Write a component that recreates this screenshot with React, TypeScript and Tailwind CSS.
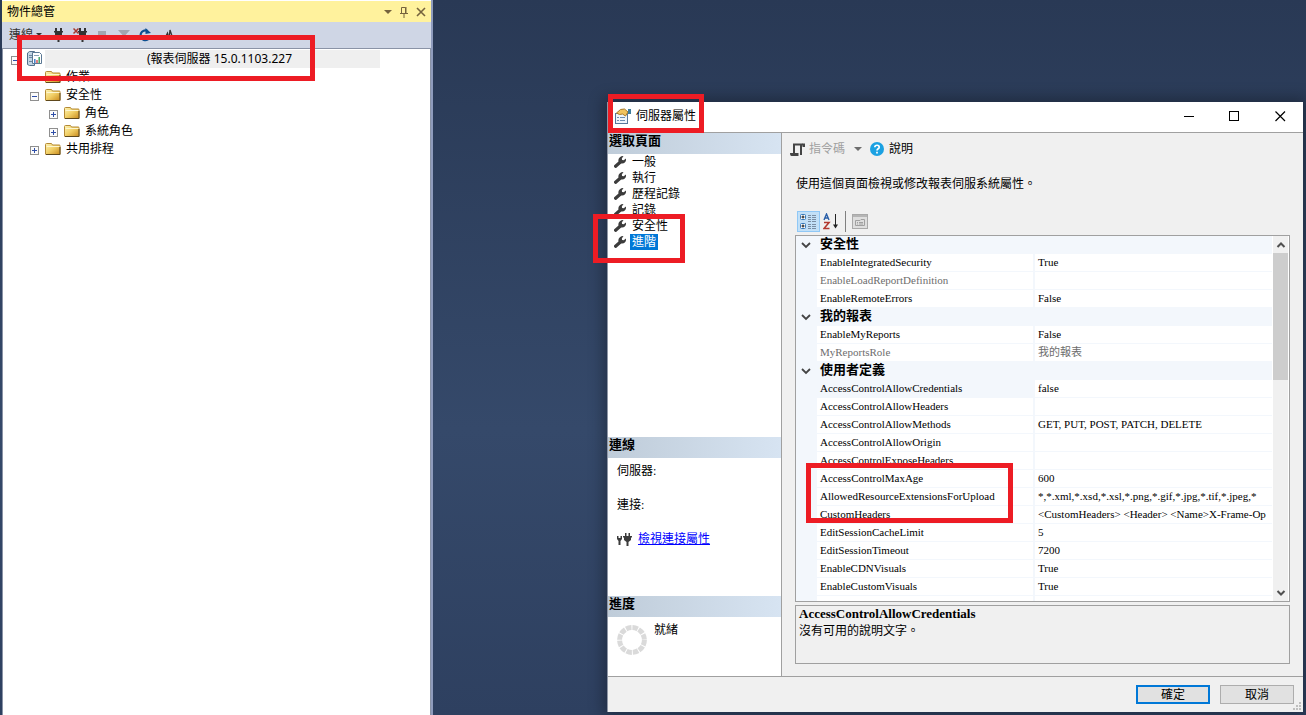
import type { ReactNode } from "react";

function Highlight({ className }: { className: string }) {
  return <div aria-hidden="true" className={`pointer-events-none absolute z-10 border-5 border-[#ed1c24] ${className}`} />;
}

function Folder() {
  return (
    <svg width="16" height="16" viewBox="0 0 16 16" className="shrink-0">
      <defs>
        <linearGradient id="folderFill" x1="0" y1="0" x2="1" y2="1">
          <stop offset="0" stopColor="#fdf3b4" />
          <stop offset="0.5" stopColor="#f1cf66" />
          <stop offset="1" stopColor="#c98a1c" />
        </linearGradient>
      </defs>
      <path d="M.5 3.500q0-1 1-1h5l1 1.500h7q.5 0 .5 1v8.500H1q-.5 0-.5-.5z" fill="url(#folderFill)" stroke="#b58a35" />
      <path d="M1 13.500h14V6" fill="none" stroke="#5e481c" />
      <path d="M1.500 5.500h13" stroke="#fdf6cf" />
    </svg>
  );
}

function ReportServer() {
  return (
    <svg width="16" height="16" viewBox="0 0 16 16" className="shrink-0">
      <path d="M1.500 2 3.500.5h5v14h-5l-2-1z" fill="#c3d5e4" stroke="#54718c" />
      <path d="M3 4.500h3M3 6.500h3M3 10.500h3" stroke="#6d87a0" />
      <path d="M6.500 1.500h7l2 2v9h-9z" fill="#fff" stroke="#5b7894" />
      <path d="M8 4.500h5" stroke="#8ba3b9" />
      <path d="M8.800 8v4" stroke="#3779c8" strokeWidth="1.400" />
      <path d="M11 9v3" stroke="#d34b4b" strokeWidth="1.400" />
      <path d="M13.200 6v6" stroke="#35a05a" strokeWidth="1.400" />
    </svg>
  );
}

function Expander({ open }: { open: boolean }) {
  return (
    <button type="button" aria-label={open ? "收合" : "展開"} className="mt-[2px] flex h-[9px] w-[9px] shrink-0">
      <svg width="9" height="9" viewBox="0 0 9 9">
        <rect x=".5" y=".5" width="8" height="8" fill="#fbfbfb" stroke="#8f8f8f" />
        <path d={open ? "M2 4.500h5" : "M2 4.500h5M4.500 2v5"} stroke="#2f4fa8" />
      </svg>
    </button>
  );
}

function Plug({ cut = false }: { cut?: boolean }) {
  return (
    <svg width="16" height="16" viewBox="0 0 16 16">
      <path d="M6 1h2v3H6zM11 1h2v3h-2zM5 4h9v1.500H5zM6 5.500h7V8l-1.500 2h-4L6 8zM8.500 10h2v5h-2z" fill="#333" />
      {cut && <path d="m.5 1.500 5 5m0-5-5 5" stroke="#a5372c" strokeWidth="1.500" />}
    </svg>
  );
}

function Wrench() {
  return (
    <svg width="12" height="12" viewBox="0 0 12 12" className="shrink-0">
      <path d="M1.600 10.300 7 5.500" stroke="#3c3c3c" strokeWidth="3.200" strokeLinecap="round" />
      <path d="M9.500 0 7.800 2.400l.3 1.500 1.600.4L12 2.600c.4 2.800-1 4.800-3.800 5L5 7 4.300 4.300C4.600 1.500 7-.1 9.500 0z" fill="#3c3c3c" />
    </svg>
  );
}

function TreeRow({ level, open, icon, children }: { level: 0 | 1 | 2; open?: boolean; icon?: ReactNode; children: ReactNode }) {
  const indent = level === 0 ? "pl-2" : level === 1 ? "pl-[27px]" : "pl-[46px]";
  return (
    <li className={`flex h-[18px] items-center ${indent}`}>
      {open === undefined ? <span className="w-[9px]" /> : <Expander open={open} />}
      <span className="ml-[6px] flex">{icon ?? <Folder />}</span>
      {children}
    </li>
  );
}

function ObjectExplorer() {
  return (
    <aside className="relative ml-[2px] flex w-[431px] shrink-0 flex-col border-r-2 border-[#8e9bbc] bg-white font-['Noto_Sans','Noto_Sans_CJK_TC',sans-serif]">
      <header className="mt-px flex h-[21px] shrink-0 items-center justify-between bg-[#fff29d] pr-1 pl-[5px]">
        <h1>物件總管</h1>
        <div className="flex items-center gap-[6px]">
          <button type="button" aria-label="視窗位置">
            <svg width="10" height="12" viewBox="0 0 10 12"><path d="M1 4h8L5 8z" fill="#75633d" /></svg>
          </button>
          <button type="button" aria-label="自動隱藏">
            <svg width="10" height="12" viewBox="0 0 10 12" fill="none" stroke="#75633d"><path d="M2.500 7V1.500h4V7M7 1v6M1 7.500h8M5 8v4" /></svg>
          </button>
          <button type="button" aria-label="關閉">
            <svg width="12" height="12" viewBox="0 0 12 12"><path d="m2 2 8 8m0-8-8 8" stroke="#75633d" strokeWidth="1.600" /></svg>
          </button>
        </div>
      </header>
      <div className="flex h-[26px] shrink-0 items-center bg-[#cfd6e5] pl-[7px] text-[#333]">
        <button type="button" className="flex items-center gap-[2px]">
          連線
          <svg width="8" height="6" viewBox="0 0 8 6"><path d="M1 1h6L4 4z" fill="#333" /></svg>
        </button>
        <button type="button" aria-label="連接" className="ml-[6px]"><Plug /></button>
        <button type="button" aria-label="中斷連接" className="ml-[8px]"><Plug cut /></button>
        <button type="button" aria-label="停止" className="ml-[8px]">
          <svg width="10" height="10" viewBox="0 0 10 10"><path d="M1 1h8v8H1z" fill="#a2a6b0" /></svg>
        </button>
        <button type="button" aria-label="篩選" className="ml-[10px]">
          <svg width="14" height="12" viewBox="0 0 14 12"><path d="M1 1h12L8.500 6v5h-3V6z" fill="#a2a6b0" /></svg>
        </button>
        <button type="button" aria-label="重新整理" className="ml-[7px]">
          <svg width="14" height="14" viewBox="0 0 14 14" fill="none"><path d="M9.500 3A4.800 4.800 0 1 0 12 8.500" stroke="#0b4f90" strokeWidth="2.200" /><path d="M7.500 0v6l5.500-1z" fill="#0b4f90" /></svg>
        </button>
        <button type="button" aria-label="活動監視器" className="ml-[10px]">
          <svg width="14" height="14" viewBox="0 0 14 14" fill="none"><path d="M1 8h3l1.500-3L7 11 8 2l2 6h3" stroke="#333" strokeWidth="1.300" /></svg>
        </button>
      </div>
      <ul className="flex-1 border-t border-r border-l border-[#8a93a6] pt-px">
        <TreeRow level={0} open icon={<ReportServer />}>
          <span className="ml-[3px] flex h-[18px] w-[335px] items-center bg-[#efefef] pl-[102px]">(報表伺服器 15.0.1103.227</span>
        </TreeRow>
        <TreeRow level={1}><span className="ml-[5px]">作業</span></TreeRow>
        <TreeRow level={1} open><span className="ml-[5px]">安全性</span></TreeRow>
        <TreeRow level={2} open={false}><span className="ml-[5px]">角色</span></TreeRow>
        <TreeRow level={2} open={false}><span className="ml-[5px]">系統角色</span></TreeRow>
        <TreeRow level={1} open={false}><span className="ml-[5px]">共用排程</span></TreeRow>
      </ul>
      <Highlight className="top-[35px] left-[15px] h-[46px] w-[298px]" />
    </aside>
  );
}

function PaneHeader({ children }: { children: ReactNode }) {
  return (
    <h3 className="h-[21px] shrink-0 bg-linear-to-r from-[#bfccd9] to-[#d7e4f2] pl-px text-[13px] leading-4 font-bold">{children}</h3>
  );
}

const pages = ["一般", "執行", "歷程記錄", "記錄", "安全性", "進階"];

function SidePane() {
  return (
    <div className="flex w-[174px] shrink-0 flex-col border-r border-[#a0a0a0] bg-white">
      <PaneHeader>選取頁面</PaneHeader>
      <ul className="flex-1">
        {pages.map((p) => (
          <li key={p} className="flex h-4 items-center gap-1 pl-[6px]">
            <Wrench />
            <button type="button" className={`h-4 px-[2px] leading-4 ${p === "進階" ? "bg-[#0078d7] text-white" : ""}`}>{p}</button>
          </li>
        ))}
      </ul>
      <PaneHeader>連線</PaneHeader>
      <div className="flex h-[138px] shrink-0 flex-col gap-[18px] pt-[5px] pl-[9px] leading-4">
        <p>伺服器:</p>
        <p>連接:</p>
        <p className="flex items-center gap-[6px]">
          <svg width="15" height="14" viewBox="0 0 15 14" fill="#3c3c3c">
            <path d="M0 4h1.500v2h2V4H5v3L3.500 9v4h-2V9L0 7zM8 1h1.500v3H8zM11.500 1H13v3h-1.500zM6 4h9v1.500H6zM7 5.500h7V8l-2.500 2v4h-2v-4L7 8z" />
          </svg>
          <a href="#connection" className="text-[#0000ff] underline">檢視連接屬性</a>
        </p>
      </div>
      <PaneHeader>進度</PaneHeader>
      <div className="flex h-[59px] shrink-0 gap-[7px] pt-[5px] pl-[9px] leading-4">
        <svg width="30" height="30" viewBox="0 0 30 30" className="mt-[3px]">
          <circle cx="15" cy="15" r="12.400" fill="none" stroke="#dadada" strokeWidth="5" strokeDasharray="5.500 1" />
        </svg>
        <p>就緒</p>
      </div>
    </div>
  );
}

type Row = { name: string; value?: string; kind?: "category" | "muted" | "active" };

const rows: Row[] = [
  { name: "安全性", kind: "category" },
  { name: "EnableIntegratedSecurity", value: "True" },
  { name: "EnableLoadReportDefinition", kind: "muted" },
  { name: "EnableRemoteErrors", value: "False" },
  { name: "我的報表", kind: "category" },
  { name: "EnableMyReports", value: "False" },
  { name: "MyReportsRole", value: "我的報表", kind: "muted" },
  { name: "使用者定義", kind: "category" },
  { name: "AccessControlAllowCredentials", value: "false", kind: "active" },
  { name: "AccessControlAllowHeaders" },
  { name: "AccessControlAllowMethods", value: "GET, PUT, POST, PATCH, DELETE" },
  { name: "AccessControlAllowOrigin" },
  { name: "AccessControlExposeHeaders" },
  { name: "AccessControlMaxAge", value: "600" },
  { name: "AllowedResourceExtensionsForUpload", value: "*,*.xml,*.xsd,*.xsl,*.png,*.gif,*.jpg,*.tif,*.jpeg,*" },
  { name: "CustomHeaders", value: "<CustomHeaders> <Header> <Name>X-Frame-Op" },
  { name: "EditSessionCacheLimit", value: "5" },
  { name: "EditSessionTimeout", value: "7200" },
  { name: "EnableCDNVisuals", value: "True" },
  { name: "EnableCustomVisuals", value: "True" },
  { name: "EnablePowerBIReportExportData", value: "True" },
];

function PropertyGrid() {
  return (
    <div className="flex min-h-0 flex-1 overflow-hidden border border-[#a0a0a0] bg-white">
      <div className="min-w-0 flex-1 overflow-hidden pr-px">
        <table className="w-full table-fixed border-separate border-spacing-0 text-[11px]">
          <colgroup>
            <col className="w-[21px]" />
            <col className="w-[218px]" />
            <col />
          </colgroup>
          <tbody>
            {rows.map((r) =>
              r.kind === "category" ? (
                <tr key={r.name} className="h-[18px] bg-[#f3f7fc]">
                  <td className="p-0 pl-[5px]">
                    <svg width="10" height="8" viewBox="0 0 10 8" className="block" fill="none"><path d="m1 2 4 4 4-4" stroke="#444" strokeWidth="1.800" /></svg>
                  </td>
                  <th colSpan={2} scope="colgroup" className="p-0 pl-[3px] text-left align-top text-[13px] leading-4 font-bold">{r.name}</th>
                </tr>
              ) : (
                <tr key={r.name} className={`h-[18px] ${r.kind === "muted" ? "text-[#6d6d6d]" : ""}`}>
                  <td className="bg-[#f3f7fc] p-0" />
                  <th scope="row" className={`border-r-2 border-b border-[#f3f7fc] p-0 pl-[3px] text-left align-top leading-4 font-normal whitespace-nowrap ${r.kind === "active" ? "bg-[#f3f7fc]" : ""}`}>{r.name}</th>
                  <td className="overflow-hidden border-b border-[#f3f7fc] p-0 pl-[3px] align-top leading-4 whitespace-nowrap">{r.value}</td>
                </tr>
              ),
            )}
          </tbody>
        </table>
      </div>
      <div className="mr-px flex w-[15px] shrink-0 flex-col bg-[#f0f0f0]">
        <button type="button" aria-label="向上捲動" className="flex h-[17px] items-center justify-center">
          <svg width="10" height="8" viewBox="0 0 10 8" fill="none"><path d="m1.500 6 3.500-3.500L8.500 6" stroke="#505050" strokeWidth="2" /></svg>
        </button>
        <div className="h-[127px] bg-[#cdcdcd]" />
        <button type="button" aria-label="向下捲動" className="mt-auto flex h-[17px] items-center justify-center">
          <svg width="10" height="8" viewBox="0 0 10 8" fill="none"><path d="m1.500 2 3.500 3.500L8.500 2" stroke="#505050" strokeWidth="2" /></svg>
        </button>
      </div>
    </div>
  );
}

function AdvancedPage() {
  return (
    <div className="flex min-w-0 flex-1 flex-col pr-[13px] pb-[12px] pl-[13px]">
      <div className="-ml-[5px] flex h-8 shrink-0 items-center">
        <button type="button" disabled className="flex items-center gap-1 text-[#a0a0a0]">
          <svg width="15" height="15" viewBox="0 0 15 15" fill="none">
            <path d="M4 11V2.500H13M11 3v10" stroke="#444" strokeWidth="2" />
            <path d="M0 11h8.500v3H1.500Q0 14 0 11zM12.500 1.500H15V5h-2.500z" fill="#444" />
          </svg>
          指令碼
        </button>
        <button type="button" aria-label="指令碼選項" className="ml-2">
          <svg width="10" height="6" viewBox="0 0 10 6"><path d="M1 1h8L5 5z" fill="#6d6d6d" /></svg>
        </button>
        <button type="button" className="ml-[7px] flex items-center gap-[5px]">
          <svg width="14" height="14" viewBox="0 0 14 14" fill="none">
            <circle cx="7" cy="7" r="7" fill="#1ba1e2" />
            <path d="M4.800 5.300C5 2.500 9.200 2.700 9.200 5.200 9.200 6.800 7 6.700 7 8.500M7 9.800v1.700" stroke="#fff" strokeWidth="1.700" />
          </svg>
          說明
        </button>
      </div>
      <p className="mt-[11px] shrink-0 pl-px leading-4">使用這個頁面檢視或修改報表伺服系統屬性。</p>
      <div className="mt-[19px] flex h-[21px] shrink-0 items-center pl-[2px]">
        <button type="button" aria-label="分類" className="flex h-[21px] w-[23px] items-center justify-center border border-[#90c8f6] bg-[#c2e0f7]">
          <svg width="17" height="17" viewBox="0 0 17 17" fill="none">
            <rect x=".5" y="1.500" width="5" height="5" rx="1" fill="#fff" stroke="#3779b8" />
            <rect x=".5" y="10.500" width="5" height="5" rx="1" fill="#fff" stroke="#3779b8" />
            <path d="M1.500 4h3M3 2.500v3M1.500 13h3M3 11.500v3" stroke="#111" />
            <path d="M8 2.500h3m1 0h4M8 4.500h3m1 0h4M8 6.500h3m1 0h4M8 8.500h3m1 0h4M8 11.500h3m1 0h4M8 13.500h3m1 0h4M8 15.500h3m1 0h4" stroke="#7a8ea3" />
          </svg>
        </button>
        <button type="button" aria-label="依字母排序" className="ml-[3px]">
          <svg width="16" height="17" viewBox="0 0 16 17" fill="none">
            <path d="m1 7 2.500-6L6 7M2 5h3" stroke="#2a5fa8" strokeWidth="1.400" />
            <path d="M1 9.500h5l-5 6h5.500" stroke="#b3392f" strokeWidth="1.600" />
            <path d="M12.500 1v12" stroke="#222" />
            <path d="M10 11.500h5L12.500 15.500z" fill="#222" />
          </svg>
        </button>
        <span className="ml-[6px] h-[21px] w-px bg-[#808080]" />
        <button type="button" disabled aria-label="屬性頁" className="ml-[6px]">
          <svg width="16" height="15" viewBox="0 0 16 15" fill="none">
            <rect x=".5" y=".5" width="15" height="14" fill="#dedede" stroke="#a9a9a9" />
            <path d="M1 2h14" stroke="#b5b5b5" strokeWidth="2" />
            <path d="M3.500 11.500v-5H8l1-1h3.500v6zM5 8.500h1m1 0h4M5 10h1m1 0h4" stroke="#a0a0a0" />
          </svg>
        </button>
      </div>
      <div className="mt-[3px] flex min-h-0 flex-1 flex-col gap-[3px]">
        <PropertyGrid />
        <section className="h-[59px] shrink-0 border border-[#a0a0a0] pl-[3px]">
          <h3 className="text-[13px] leading-4 font-bold">AccessControlAllowCredentials</h3>
          <p className="mt-px leading-4">沒有可用的說明文字。</p>
        </section>
      </div>
    </div>
  );
}

function ServerProperties() {
  return (
    <section
      aria-label="伺服器屬性"
      className="relative mt-[102px] mr-[3px] mb-[3px] ml-[174px] flex min-w-0 flex-1 flex-col border-l border-[#8f97a6] bg-[#f0f0f0] font-['Liberation_Serif','Noto_Sans_CJK_TC',serif] shadow-[0_0_14px_4px_rgba(0,0,0,0.3)]"
    >
      <header className="flex h-[30px] shrink-0 items-center bg-white pb-[2px] pl-[7px]">
        <svg width="16" height="16" viewBox="0 0 16 16" fill="none">
          <rect x=".5" y="5.500" width="12" height="10" fill="#eef4fa" stroke="#56779a" />
          <path d="M2 9.500h2m1 0h5M2 12.500h2m1 0h5" stroke="#6b8db0" />
          <path d="m1.500 5 4-3.500 4-.5L13 4l-2.500 4-3-2-3 .5z" fill="#f0c35e" stroke="#a77a28" />
          <path d="M13 1h3v5h-3z" fill="#3f7d9c" />
        </svg>
        <h2 className="ml-[5px] flex-1">伺服器屬性</h2>
        <div className="flex items-center gap-[35px] pr-[17px]">
          <button type="button" aria-label="最小化">
            <svg width="11" height="11" viewBox="0 0 11 11"><path d="M1 5.500h10" stroke="#000" /></svg>
          </button>
          <button type="button" aria-label="最大化">
            <svg width="11" height="11" viewBox="0 0 11 11"><rect x=".5" y=".5" width="9" height="9" fill="none" stroke="#000" /></svg>
          </button>
          <button type="button" aria-label="關閉">
            <svg width="11" height="11" viewBox="0 0 11 11"><path d="m.5.5 9.500 9.500m0-9.500L.5 10" stroke="#000" strokeWidth="1.200" /></svg>
          </button>
        </div>
      </header>
      <div className="flex min-h-0 flex-1 border-y border-[#a0a0a0]">
        <SidePane />
        <AdvancedPage />
      </div>
      <footer className="relative flex h-[35px] shrink-0 items-center justify-end gap-[10px] pr-[9px]">
        <button type="button" className="h-[19px] w-[74px] border-2 border-[#0078d7] bg-[#e1e1e1] leading-4">確定</button>
        <button type="button" className="h-[19px] w-[74px] border border-[#adadad] bg-[#e1e1e1] leading-4">取消</button>
        <svg width="9" height="9" viewBox="0 0 9 9" className="absolute right-px bottom-px" fill="#bfbfbf">
          <path d="M6 0h2v2H6zM3 3h2v2H3zM6 3h2v2H6zM0 6h2v2H0zM3 6h2v2H3zM6 6h2v2H6z" />
        </svg>
      </footer>
      <Highlight className="-top-2 left-0 h-[39px] w-24" />
      <Highlight className="top-28 -left-[15px] h-[49px] w-[92px]" />
      <Highlight className="top-[361px] left-[198px] h-[60px] w-[207px]" />
    </section>
  );
}

export default function App() {
  return (
    <main className="flex h-screen overflow-hidden bg-linear-to-b from-[#293955] via-[#35496a] via-60% to-[#2e4060] text-[12px] leading-4 text-black">
      <ObjectExplorer />
      <ServerProperties />
    </main>
  );
}
